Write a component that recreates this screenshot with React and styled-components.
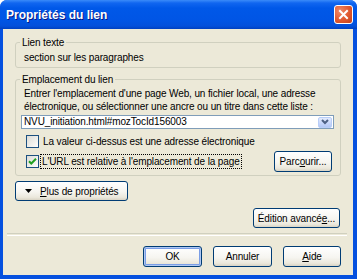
import React from "react";
import styled, { createGlobalStyle } from "styled-components";

const Global = createGlobalStyle`
  html, body { margin: 0; padding: 0; background: #ffffff; }
  body { font-family: "Liberation Sans", Arial, sans-serif; }
`;

const Window = styled.div`
  width: 357px;
  height: 279px;
  box-sizing: border-box;
  display: flex;
  flex-direction: column;
  background: #0550df;
  border-radius: 7px 7px 0 0;
  overflow: hidden;
`;

const TitleBar = styled.div`
  height: 29px;
  flex: none;
  display: flex;
  align-items: center;
  justify-content: space-between;
  padding: 0 4px 0 6px;
  background: linear-gradient(
    180deg,
    #3a8bf9 0px,
    #1166f0 3px,
    #0058e8 8px,
    #0055e5 20px,
    #0350db 26px,
    #0040c0 29px
  );
`;

const Title = styled.span`
  color: #ffffff;
  font-weight: bold;
  font-size: 12px;
  text-shadow: 1px 1px #0a1883;
  font-family: "Liberation Sans", Arial, sans-serif;
`;

const CloseButton = styled.div`
  width: 19px;
  height: 19px;
  box-sizing: border-box;
  border: 1px solid #ffffff;
  border-radius: 3px;
  background: radial-gradient(circle at 30% 30%, #f08a68 0%, #e0582f 55%, #c1401b 100%);
  display: flex;
  align-items: center;
  justify-content: center;
`;

const Body = styled.div`
  flex: 1;
  margin: 0 4px 4px 3px;
  background: #ece9d8;
  padding: 7px 12px 0 12px;
  display: flex;
  flex-direction: column;
  font-size: 10px;
  letter-spacing: -0.12px;
  line-height: 13px;
  color: #000000;
`;

const Group = styled.fieldset`
  margin: ${(p) => p.$mt}px 0 0 0;
  padding: ${(p) => p.$pad};
  border: 1px solid #d0d0bf;
  border-radius: 3px;
  min-width: 0;
`;

const Legend = styled.legend`
  padding: 0 2px;
  margin-left: ${(p) => p.$ml}px;
  line-height: 13px;
  color: #000000;
`;

const Text = styled.div`
  white-space: nowrap;
  padding-left: ${(p) => p.$pl || 0}px;
`;

const Combo = styled.div`
  height: 14px;
  box-sizing: border-box;
  margin-top: 2px;
  border: 1px solid #7f9db9;
  background: #ffffff;
  display: flex;
  align-items: center;
  padding-left: 2px;
  line-height: 12px;
`;

const ComboValue = styled.span`
  flex: 1;
  white-space: nowrap;
  overflow: hidden;
`;

const ComboArrow = styled.div`
  width: 14px;
  height: 11px;
  margin-right: 1px;
  box-sizing: border-box;
  border: 1px solid #b9cef8;
  border-radius: 2px;
  background: linear-gradient(180deg, #e3ebfd 0%, #c6d6fb 60%, #b3c8f6 100%);
  display: flex;
  align-items: center;
  justify-content: center;
`;

const CheckRow = styled.div`
  display: flex;
  align-items: center;
  justify-content: space-between;
  margin-top: ${(p) => p.$mt}px;
  height: ${(p) => p.$h}px;
  padding-left: 5px;
`;

const CheckLabel = styled.label`
  display: flex;
  align-items: center;
  gap: ${(p) => (p.$focus ? 2 : 3)}px;
  white-space: nowrap;
`;

const Box = styled.span`
  width: 13px;
  height: 13px;
  box-sizing: border-box;
  border: 1px solid #1c5180;
  background: linear-gradient(135deg, #dcdcd7 0%, #f4f4f0 70%, #ffffff 100%);
  display: flex;
  align-items: center;
  justify-content: center;
`;

const LabelText = styled.span`
  padding: 0 1px;
  outline: ${(p) => (p.$focus ? "1px dotted #000000" : "none")};
  outline-offset: 0;
`;

const Button = styled.button`
  font: inherit;
  letter-spacing: inherit;
  color: #000000;
  width: ${(p) => p.$w}px;
  height: ${(p) => p.$h || 21}px;
  padding: ${(p) => (p.$left ? "0 0 0 9px" : "0")};
  margin: ${(p) => p.$m || "0"};
  box-sizing: border-box;
  border: 1px solid #003c74;
  border-radius: 3px;
  background: linear-gradient(180deg, #ffffff 0%, #f6f5f0 55%, #ebe8dc 85%, #d8d3c4 100%);
  box-shadow: ${(p) =>
    p.$default
      ? "inset 0 0 0 1px #b0c8f2, inset 0 0 0 2px #7b9ee6"
      : "inset 0 -1px 0 #dcd7c8"};
  display: flex;
  align-items: center;
  justify-content: ${(p) => (p.$left ? "flex-start" : "center")};
  gap: 8px;
  align-self: ${(p) => p.$self || "auto"};
  white-space: nowrap;
  flex: none;
`;

const Key = styled.span`
  text-decoration: underline;
`;

const Separator = styled.div`
  margin: 5px -6px 0 -8px;
  height: 1px;
  border-top: 1px solid #d0d0bf;
  border-bottom: 1px solid #ffffff;
`;

const ButtonRow = styled.div`
  display: flex;
  justify-content: flex-end;
  gap: 11px;
  margin-top: 10px;
`;

const CheckMark = () => (
  <svg width="9" height="9" viewBox="0 0 9 9">
    <path d="M1 4.2 L3.3 6.5 L8 1.8" fill="none" stroke="#21a121" strokeWidth="2" />
  </svg>
);

export default function App() {
  return (
    <>
      <Global />
      <Window>
        <TitleBar>
          <Title>Propriétés du lien</Title>
          <CloseButton>
            <svg width="11" height="11" viewBox="0 0 11 11">
              <path d="M2 2 L9 9 M9 2 L2 9" stroke="#ffffff" strokeWidth="2" strokeLinecap="square" />
            </svg>
          </CloseButton>
        </TitleBar>
        <Body>
          <Group $mt={0} $pad="2px 8px 3px 8px">
            <Legend $ml={-4}>Lien texte</Legend>
            <Text>section sur les paragraphes</Text>
          </Group>
          <Group $mt={5} $pad="1px 6px 3px 5px">
            <Legend $ml={-1}>Emplacement du lien</Legend>
            <Text $pl={3}>
              Entrer l'emplacement d'une page Web, un fichier local, une adresse
              <br />
              électronique, ou sélectionner une ancre ou un titre dans cette liste :
            </Text>
            <Combo>
              <ComboValue>NVU_initiation.html#mozTocId156003</ComboValue>
              <ComboArrow>
                <svg width="8" height="6" viewBox="0 0 8 6">
                  <path d="M1 1 L4 4 L7 1" fill="none" stroke="#4d6185" strokeWidth="2" />
                </svg>
              </ComboArrow>
            </Combo>
            <CheckRow $mt={6} $h={13}>
              <CheckLabel>
                <Box />
                <LabelText>La valeur ci-dessus est une adresse électronique</LabelText>
              </CheckLabel>
            </CheckRow>
            <CheckRow $mt={3} $h={21}>
              <CheckLabel $focus>
                <Box>
                  <CheckMark />
                </Box>
                <LabelText $focus>L'URL est relative à l'emplacement de la page</LabelText>
              </CheckLabel>
              <Button $w={58} $m="0 2px 0 0">
                <span>
                  Parc<Key>o</Key>urir...
                </span>
              </Button>
            </CheckRow>
          </Group>
          <Button $w={113} $h={20} $left $m="5px 0 0 0">
            <svg width="7" height="4" viewBox="0 0 7 4">
              <path d="M0 0 L7 0 L3.5 4 Z" fill="#000000" />
            </svg>
            <span>
              <Key>P</Key>lus de propriétés
            </span>
          </Button>
          <Button $w={87} $h={20} $self="flex-end" $m="7px 1px 0 0">
            <span>
              Édition avancé<Key>e</Key>...
            </span>
          </Button>
          <Separator />
          <ButtonRow>
            <Button $w={59} $default>OK</Button>
            <Button $w={59}>Annuler</Button>
            <Button $w={58}>
              <span>
                <Key>A</Key>ide
              </span>
            </Button>
          </ButtonRow>
        </Body>
      </Window>
    </>
  );
}
